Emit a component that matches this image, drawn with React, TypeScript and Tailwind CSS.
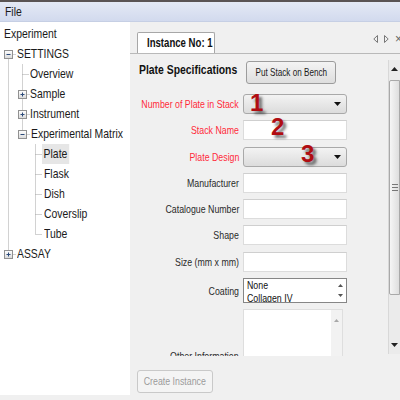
import React from 'react';

const FONT = { fontFamily: '"Liberation Sans", Arial, sans-serif' };

// the app font is a narrow Tahoma; squeeze Liberation Sans horizontally to match
function T({ children, origin = 'left', className = '' }: { children: React.ReactNode; origin?: 'left' | 'right' | 'center'; className?: string }) {
  const o = origin === 'left' ? 'origin-left' : origin === 'right' ? 'origin-right' : 'origin-center';
  return <span className={`inline-block whitespace-nowrap scale-x-[0.8] ${o} ${className}`}>{children}</span>;
}

type TreeRow = { label: string; indent: number; selected?: boolean };

const treeRows: TreeRow[] = [
  { label: 'Experiment', indent: 4 },
  { label: 'SETTINGS', indent: 17 },
  { label: 'Overview', indent: 30 },
  { label: 'Sample', indent: 30 },
  { label: 'Instrument', indent: 30 },
  { label: 'Experimental Matrix', indent: 31 },
  { label: 'Plate', indent: 42, selected: true },
  { label: 'Flask', indent: 44 },
  { label: 'Dish', indent: 44 },
  { label: 'Coverslip', indent: 44 },
  { label: 'Tube', indent: 44 },
  { label: 'ASSAY', indent: 17 },
];

// +/- expander box in the tree
function Expander({ cx, cy, open }: { cx: number; cy: number; open: boolean }) {
  return (
    <g>
      <rect x={cx - 4} y={cy - 4} width={8} height={8} fill="url(#boxg)" stroke="#919191" strokeWidth={1} />
      <line x1={cx - 2} y1={cy} x2={cx + 2} y2={cy} stroke="#2b4a7a" strokeWidth={1} />
      {!open && <line x1={cx} y1={cy - 2} x2={cx} y2={cy + 2} stroke="#2b4a7a" strokeWidth={1} />}
    </g>
  );
}

function TreeLines() {
  const c = (i: number) => 12.5 + 20 * i;
  const dot = { stroke: '#a5a5a5', strokeWidth: 1, strokeDasharray: '1 1' };
  return (
    <svg className="absolute left-0 top-0 pointer-events-none" width={130} height={260}>
      <defs>
        <linearGradient id="boxg" x1="0" y1="0" x2="0" y2="1">
          <stop offset="0" stopColor="#ffffff" />
          <stop offset="1" stopColor="#d9d9d9" />
        </linearGradient>
      </defs>
      {/* root level */}
      <line x1={8.5} y1={c(1) + 4} x2={8.5} y2={c(11) - 4} {...dot} />
      <line x1={12.5} y1={c(1)} x2={16} y2={c(1)} {...dot} />
      <line x1={12.5} y1={c(11)} x2={16} y2={c(11)} {...dot} />
      {/* settings children */}
      <line x1={22.5} y1={c(1) + 10} x2={22.5} y2={c(5) - 4} {...dot} />
      <line x1={22.5} y1={c(2)} x2={29} y2={c(2)} {...dot} />
      {[3, 4, 5].map((i) => (
        <line key={i} x1={26.5} y1={c(i)} x2={29.5} y2={c(i)} {...dot} />
      ))}
      {/* matrix children */}
      <line x1={35.5} y1={c(5) + 10} x2={35.5} y2={c(10)} {...dot} />
      {[6, 7, 8, 9, 10].map((i) => (
        <line key={i} x1={35.5} y1={c(i)} x2={42} y2={c(i)} {...dot} />
      ))}
      <Expander cx={8.5} cy={c(1)} open />
      <Expander cx={22.5} cy={c(3)} open={false} />
      <Expander cx={22.5} cy={c(4)} open={false} />
      <Expander cx={22.5} cy={c(5)} open />
      <Expander cx={8.5} cy={c(11)} open={false} />
    </svg>
  );
}

function Combo() {
  return (
    <div className="w-[104px] h-[20px] rounded-[3px] border border-[#a9a9a9] bg-gradient-to-b from-[#f3f3f3] to-[#dcdcdc] flex items-center justify-end pr-[5px]">
      <svg width="7" height="4" viewBox="0 0 7 4"><path d="M0 0h7L3.5 4z" fill="#111" /></svg>
    </div>
  );
}

function TextBox() {
  return <div className="w-[104px] h-[20px] bg-white border border-[#dcdcdc] border-t-[#cfcfcf]" />;
}

function Label({ text, red }: { text: string; red?: boolean }) {
  return (
    <div className={`w-[100px] flex justify-end text-[11px] leading-[14px] ${red ? 'text-[#ff2a3a]' : 'text-[#2a2a2a]'}`}>
      <T origin="right">{text}</T>
    </div>
  );
}

function Row({ label, red, children }: { label: string; red?: boolean; children: React.ReactNode }) {
  return (
    <div className="flex items-center gap-[4px]">
      <Label text={label} red={red} />
      {children}
    </div>
  );
}

export default function App() {
  return (
    <div className="w-[400px] h-[400px] bg-[#f0f0f0] flex flex-col overflow-hidden relative" style={FONT}>
      <div className="h-[2px] bg-[#5a5454]" />
      <div className="h-[20px] bg-gradient-to-b from-[#e4e9f5] to-[#d2daee] border-b border-[#c6cfe4] flex items-center pl-[5px] text-[13px] text-[#1a1a1a]">
        <T>File</T>
      </div>

      <div className="flex h-[373px]">
        {/* tree panel */}
        <div className="w-[130px] bg-white relative pt-[2px] text-[13px] text-[#1a1a1a]">
          <TreeLines />
          {treeRows.map((r) => (
            <div key={r.label} className="h-[20px] flex items-center" style={{ paddingLeft: r.indent }}>
              <T className={r.selected ? 'bg-[#e6e6e6] px-[2px] leading-[20px]' : 'leading-[20px]'}>{r.label}</T>
            </div>
          ))}
        </div>

        {/* instance panel */}
        <div className="flex-1 flex flex-col relative">
          <div className="pt-[10px] border-b border-[#b9b9b9] flex items-end">
            <div className="ml-[7px] w-[78px] h-[21px] pl-[9px] bg-white border border-b-0 border-[#a7a7a7] rounded-t-[2px] flex items-center text-[12px] font-bold text-[#111]">
              <T>Instance No: 1</T>
            </div>
            <div className="ml-auto mb-[8px] flex items-center gap-[6px] text-[#666]">
              <svg width="5" height="8" viewBox="0 0 5 8"><path d="M4.5 0.5L0.8 4l3.7 3.5z" fill="none" stroke="#777" /></svg>
              <svg width="5" height="8" viewBox="0 0 5 8"><path d="M0.5 0.5L4.2 4L0.5 7.5z" fill="none" stroke="#777" /></svg>
              <span className="text-[12px] leading-none -mr-[2px]">×</span>
            </div>
          </div>

          <div className="mt-[4px] h-[298px] flex">
            <div className="flex-1 overflow-hidden pl-[9px] pt-[3px]">
              <div className="flex items-start">
                <div className="w-[107px] text-[13px] font-bold leading-[16px] text-[#111] pt-[1px]">
                  <T>Plate Specifications</T>
                </div>
                <div className="w-[90px] h-[23px] rounded-[3px] border border-[#9c9c9c] bg-gradient-to-b from-[#f4f4f4] to-[#dedede] flex items-center justify-center text-[11px] text-[#1a1a1a]">
                  <T origin="center" className="scale-x-[0.74]">Put Stack on Bench</T>
                </div>
              </div>

              <div className="mt-[10px] flex flex-col gap-[6.3px]">
                <Row label="Number of Plate in Stack" red><Combo /></Row>
                <Row label="Stack Name" red><TextBox /></Row>
                <Row label="Plate Design" red><Combo /></Row>
                <Row label="Manufacturer"><TextBox /></Row>
                <Row label="Catalogue Number"><TextBox /></Row>
                <Row label="Shape"><TextBox /></Row>
                <Row label="Size (mm x mm)"><TextBox /></Row>
                <Row label="Coating">
                  <div className="w-[104px] h-[25px] bg-white border border-[#868686] flex overflow-hidden">
                    <div className="flex-1 pl-[3px] text-[11px] leading-[13px] text-[#111]">
                      <div><T>None</T></div>
                      <div><T>Collagen IV</T></div>
                    </div>
                    <div className="w-[11px] flex flex-col items-center justify-between py-[5px]">
                      <svg width="5" height="3" viewBox="0 0 5 3"><path d="M0 3h5L2.5 0z" fill="#555" /></svg>
                      <svg width="5" height="3" viewBox="0 0 5 3"><path d="M0 0h5L2.5 3z" fill="#555" /></svg>
                    </div>
                  </div>
                </Row>
                <Row label="Other Information">
                  <div className="w-[100px] h-[94px] bg-white border border-[#dedede] flex justify-end">
                    <div className="w-[11px] bg-[#f2f2f2] flex justify-center pt-[9px]">
                      <svg width="5" height="3" viewBox="0 0 5 3"><path d="M0 3h5L2.5 0z" fill="#a8a8a8" /></svg>
                    </div>
                  </div>
                </Row>
              </div>
            </div>

            {/* vertical scrollbar */}
            <div className="w-[12px] mt-[2px] h-[294px] border-l border-[#d8d8d8] bg-[#ebebeb] flex flex-col">
              <div className="h-[18px] flex items-center justify-center">
                <svg width="7" height="4" viewBox="0 0 7 4"><path d="M0 4h7L3.5 0z" fill="#222" /></svg>
              </div>
              <div className="h-[215px] mt-[2px] border border-[#a9a9a9] rounded-l-[2px] bg-gradient-to-r from-[#f6f6f6] to-[#dedede] flex items-center justify-center">
                <svg width="6" height="7" viewBox="0 0 6 7">
                  <path d="M0 0.5h6M0 3.5h6M0 6.5h6" stroke="#777" strokeWidth="1" />
                </svg>
              </div>
              <div className="flex-1" />
              <div className="h-[18px] flex items-center justify-center">
                <svg width="7" height="4" viewBox="0 0 7 4"><path d="M0 0h7L3.5 4z" fill="#222" /></svg>
              </div>
            </div>
          </div>

          <div className="mt-[14px] pl-[7px]">
            <div className="w-[76px] h-[23px] rounded-[3px] border border-[#c9c9c9] bg-[#f4f4f4] flex items-center justify-center text-[11px] text-[#9b9b9b]">
              <T origin="center">Create Instance</T>
            </div>
          </div>

          {/* callout numbers over the form */}
          {[
            { n: '1', left: 120, top: 69 },
            { n: '2', left: 141, top: 93 },
            { n: '3', left: 171, top: 120 },
          ].map((m) => (
            <span
              key={m.n}
              className="absolute text-[24px] leading-none font-bold text-[#b00d12]"
              style={{ left: m.left, top: m.top, textShadow: '3px 3px 3px rgba(0,0,0,0.55)' }}
            >
              {m.n}
            </span>
          ))}
        </div>
      </div>
    </div>
  );
}
